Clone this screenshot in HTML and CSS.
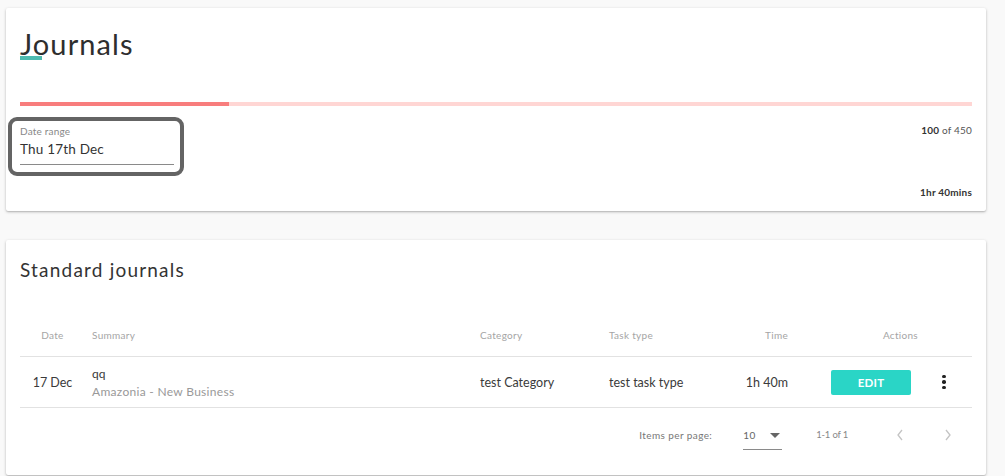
FILE: index.html
```html
<!DOCTYPE html>
<html>
<head>
<meta charset="utf-8">
<link rel="stylesheet" href="styles.css">
</head>
<body>
<div class="page">
  <section class="card summary-card">
    <h1 class="title">Journals<span class="title-accent"></span></h1>
    <div class="progress"><div class="progress-fill" style="width:22%"></div></div>
    <div class="summary-row">
      <div class="date-field">
        <div class="field-label">Date range</div>
        <div class="field-value">Thu 17th Dec</div>
      </div>
      <div class="summary-stats">
        <div class="stat"><b>100</b> of 450</div>
        <div class="stat"><b>1hr 40mins</b></div>
      </div>
    </div>
  </section>

  <section class="card table-card">
    <h2 class="subtitle">Standard journals</h2>
    <div class="table">
      <div class="row head">
        <div class="c-date">Date</div>
        <div class="c-summary">Summary</div>
        <div class="c-cat">Category</div>
        <div class="c-task">Task type</div>
        <div class="c-time">Time</div>
        <div class="c-actions">Actions</div>
      </div>
      <div class="row body">
        <div class="c-date">17 Dec</div>
        <div class="c-summary">
          <div class="sum-main">qq</div>
          <div class="sum-sub">Amazonia - New Business</div>
        </div>
        <div class="c-cat">test Category</div>
        <div class="c-task">test task type</div>
        <div class="c-time">1h 40m</div>
        <div class="c-actions">
          <button class="edit-btn">EDIT</button>
          <span class="kebab"><i></i><i></i><i></i></span>
        </div>
      </div>
    </div>
    <div class="paginator">
      <span class="pg-label">Items per page:</span>
      <span class="pg-select"><span>10</span><span class="pg-arrow"></span></span>
      <span class="pg-range">1-1 of 1</span>
      <span class="pg-nav">
        <svg width="10" height="14" viewBox="0 0 10 14"><path d="M7 2 L3 7 L7 12" fill="none" stroke="#c4c4c4" stroke-width="1.3"/></svg>
      </span>
      <span class="pg-nav">
        <svg width="10" height="14" viewBox="0 0 10 14"><path d="M3 2 L7 7 L3 12" fill="none" stroke="#c4c4c4" stroke-width="1.3"/></svg>
      </span>
    </div>
  </section>
</div>
</body>
</html>
```

FILE: styles.css
```css
* { box-sizing: border-box; }
html, body { margin: 0; padding: 0; }
body {
  background: #f9f9f9;
  font-family: Lato, "Open Sans", Arial, sans-serif;
  color: #333;
  width: 1005px;
  height: 476px;
  overflow: hidden;
}
.page {
  padding: 8px 19px 0 6px;
  display: flex;
  flex-direction: column;
  gap: 29px;
}
.card {
  background: #fff;
  box-shadow: 0 1px 3px rgba(0,0,0,0.25), 0 1px 1px rgba(0,0,0,0.08);
  border-radius: 2px;
  padding: 0 14px;
}
.summary-card { height: 203px; padding-top: 19px; }
.title {
  margin: 0;
  font-weight: 400;
  font-size: 29px;
  line-height: 34px;
  color: #2e2e2e;
  letter-spacing: 1.1px;
  position: relative;
  display: inline-block;
}
.title-accent {
  position: absolute;
  left: 0;
  top: 29px;
  width: 22px;
  height: 4px;
  background: #4ebbb0;
}
.progress {
  margin-top: 41px;
  height: 4px;
  background: #ffd6d4;
}
.progress-fill { height: 100%; background: #f87d7d; }
.summary-row {
  display: flex;
  justify-content: space-between;
  margin-top: 11px;
}
.date-field {
  margin-left: -12px;
  width: 176px;
  height: 59px;
  border: 4px solid #646464;
  border-radius: 9px;
  padding: 4px 6px 0 8px;
}
.field-label { font-size: 10px; color: #888; line-height: 12px; letter-spacing: 0.2px; }
.field-value {
  font-size: 13.5px;
  color: #333;
  line-height: 18px;
  margin-top: 3px;
  padding-bottom: 6px;
  border-bottom: 1px solid #8a8a8a;
  letter-spacing: 0.2px;
}
.summary-stats {
  display: flex;
  flex-direction: column;
  justify-content: space-between;
  align-items: flex-end;
  padding-top: 7px;
  height: 81px;
  font-size: 10px;
  color: #555;
  letter-spacing: 0.2px;
}
.stat b { color: #333; font-weight: 700; }

.table-card { height: 235px; padding-top: 18px; }
.subtitle {
  margin: 0;
  font-weight: 400;
  font-size: 19px;
  line-height: 24px;
  color: #333;
  letter-spacing: 1.2px;
}
.table { margin-top: 34px; }
.row {
  display: flex;
  align-items: center;
  border-bottom: 1px solid #e2e2e2;
}
.row.head { height: 41px; font-size: 10px; color: #a5a5a5; align-items: flex-start; padding-top: 13px; letter-spacing: 0.3px; }
.row.body { height: 51px; font-size: 12.5px; color: #3a3a3a; }
.c-date { width: 72px; text-align: center; flex: none; padding-right: 7px; }
.c-summary { width: 388px; flex: none; }
.row.body .c-summary { padding-top: 2px; }
.c-cat { width: 129px; flex: none; }
.c-task { width: 110px; flex: none; }
.c-time { width: 69px; text-align: right; flex: none; }
.c-actions { flex: 1; display: flex; align-items: center; justify-content: flex-end; padding-right: 54px; }
.row.body .c-actions { padding-right: 24px; justify-content: flex-start; padding-left: 43px; }
.sum-main { font-size: 12px; line-height: 14px; }
.sum-sub { font-size: 12px; color: #999; line-height: 14px; margin-top: 4px; letter-spacing: 0.3px; }
.edit-btn {
  width: 80px;
  height: 25px;
  border: none;
  border-radius: 2px;
  background: #2ad5c6;
  color: #fff;
  font-family: inherit;
  font-size: 11.5px;
  font-weight: 700;
  letter-spacing: 0.2px;
  padding: 0;
}
.kebab {
  margin-left: 31px;
  display: flex;
  flex-direction: column;
  gap: 2px;
}
.kebab i { width: 3.5px; height: 3.5px; border-radius: 50%; background: #222; display: block; }

.paginator {
  display: flex;
  align-items: flex-start;
  justify-content: flex-end;
  height: 55px;
  font-size: 10px;
  color: #777;
  padding-top: 20px;
  letter-spacing: 0.4px;
}
.pg-label { margin-right: 31px; line-height: 14px; }
.pg-select {
  width: 39px;
  height: 22px;
  display: flex;
  align-items: flex-start;
  justify-content: space-between;
  border-bottom: 1px solid #8a8a8a;
  color: #666;
  line-height: 14px;
}
.pg-arrow {
  width: 0; height: 0;
  border-left: 5px solid transparent;
  border-right: 5px solid transparent;
  border-top: 5px solid #666;
  margin-right: 2px;
  margin-top: 5px;
}
.pg-range { margin-left: 34px; margin-right: 28px; color: #888; line-height: 14px; letter-spacing: -0.2px; font-size: 9.5px; }
.pg-nav { width: 48px; display: flex; justify-content: center; height: 14px; align-items: center; }
```
